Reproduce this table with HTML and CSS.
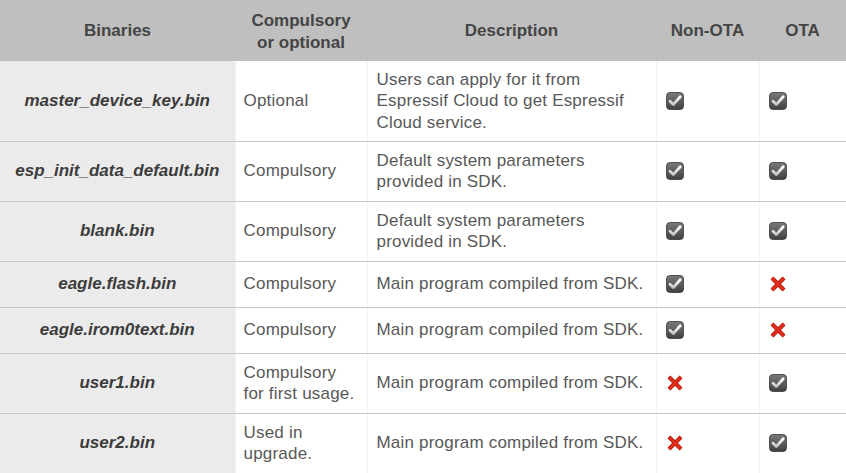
FILE: index.html
```html
<!DOCTYPE html>
<html>
<head>
<meta charset="utf-8">
<link rel="stylesheet" href="styles.css">
</head>
<body>
<svg width="0" height="0" class="defs">
  <defs>
    <linearGradient id="boxg" x1="0" y1="0" x2="0" y2="1">
      <stop offset="0" stop-color="#7a7a7a"/>
      <stop offset="1" stop-color="#404040"/>
    </linearGradient>
    <linearGradient id="chkg" x1="0" y1="0" x2="0" y2="1">
      <stop offset="0" stop-color="#ffffff"/>
      <stop offset="1" stop-color="#c4c4c4"/>
    </linearGradient>
    <symbol id="check" viewBox="0 0 18 18">
      <rect x="0.5" y="0.5" width="17" height="17" rx="3.5" fill="url(#boxg)" stroke="#383838" stroke-width="0.8"/>
      <path d="M4 9.3 L7.3 12.6 L14.2 4.8" fill="none" stroke="url(#chkg)" stroke-width="2.8" stroke-linecap="round" stroke-linejoin="round"/>
    </symbol>
    <symbol id="cross" viewBox="0 0 18 18">
      <path d="M3 3 L15 15 M15 3 L3 15" fill="none" stroke="#a8160b" stroke-width="4" stroke-linecap="butt"/>
      <path d="M3 3 L15 15 M15 3 L3 15" fill="none" stroke="#e22c1a" stroke-width="2.8" stroke-linecap="butt"/>
    </symbol>
  </defs>
</svg>
<table class="bins">
  <colgroup>
    <col class="c-name"><col class="c-req"><col class="c-desc"><col class="c-non"><col class="c-ota">
  </colgroup>
  <thead>
    <tr class="head">
      <th>Binaries</th>
      <th class="two">Compulsory<br>or optional</th>
      <th>Description</th>
      <th>Non-OTA</th>
      <th>OTA</th>
    </tr>
  </thead>
  <tbody>
    <tr class="r-3">
      <td class="name">master_device_key.bin</td>
      <td>Optional</td>
      <td>Users can apply for it from Espressif Cloud to get Espressif Cloud service.</td>
      <td class="ic"><svg class="icon"><use href="#check"/></svg></td>
      <td class="ic"><svg class="icon"><use href="#check"/></svg></td>
    </tr>
    <tr class="r-2">
      <td class="name">esp_init_data_default.bin</td>
      <td>Compulsory</td>
      <td>Default system parameters provided in SDK.</td>
      <td class="ic"><svg class="icon"><use href="#check"/></svg></td>
      <td class="ic"><svg class="icon"><use href="#check"/></svg></td>
    </tr>
    <tr class="r-2">
      <td class="name">blank.bin</td>
      <td>Compulsory</td>
      <td>Default system parameters provided in SDK.</td>
      <td class="ic"><svg class="icon"><use href="#check"/></svg></td>
      <td class="ic"><svg class="icon"><use href="#check"/></svg></td>
    </tr>
    <tr class="r-1">
      <td class="name">eagle.flash.bin</td>
      <td>Compulsory</td>
      <td>Main program compiled from SDK.</td>
      <td class="ic"><svg class="icon"><use href="#check"/></svg></td>
      <td class="ic"><svg class="icon"><use href="#cross"/></svg></td>
    </tr>
    <tr class="r-1">
      <td class="name">eagle.irom0text.bin</td>
      <td>Compulsory</td>
      <td>Main program compiled from SDK.</td>
      <td class="ic"><svg class="icon"><use href="#check"/></svg></td>
      <td class="ic"><svg class="icon"><use href="#cross"/></svg></td>
    </tr>
    <tr class="r-2">
      <td class="name">user1.bin</td>
      <td>Compulsory<br>for first usage.</td>
      <td>Main program compiled from SDK.</td>
      <td class="ic"><svg class="icon"><use href="#cross"/></svg></td>
      <td class="ic"><svg class="icon"><use href="#check"/></svg></td>
    </tr>
    <tr class="r-2">
      <td class="name">user2.bin</td>
      <td>Used in<br>upgrade.</td>
      <td>Main program compiled from SDK.</td>
      <td class="ic"><svg class="icon"><use href="#cross"/></svg></td>
      <td class="ic"><svg class="icon"><use href="#check"/></svg></td>
    </tr>
  </tbody>
</table>
</body>
</html>
```

FILE: styles.css
```css
html, body {
  margin: 0;
  padding: 0;
  background: #ffffff;
}
.defs {
  position: absolute;
  width: 0;
  height: 0;
}
.bins {
  width: 846px;
  border-collapse: collapse;
  table-layout: fixed;
  font-family: "Liberation Sans", Arial, sans-serif;
  font-size: 17px;
  letter-spacing: 0.2px;
  line-height: 21.5px;
  color: #585858;
}
.c-name { width: 235px; }
.c-req { width: 132px; }
.c-desc { width: 289px; }
.c-non { width: 103px; }
.c-ota { width: 87px; }

.head {
  background: #bebfbe;
  height: 61px;
}
.head th {
  font-weight: bold;
  color: #454545;
  font-size: 17px;
  letter-spacing: 0;
  padding: 0;
  text-align: center;
  vertical-align: middle;
  line-height: 22px;
}
.head th.two { padding-top: 2px; }

td {
  padding: 0 8px;
  vertical-align: middle;
  border-bottom: 1.5px solid #c6c6c6;
  border-left: 1px solid #f2f2f2;
}
td:first-child { border-left: none; }
.r-3 { height: 80px; }
.r-2 { height: 60px; }
.r-1 { height: 46px; }

td.name {
  background: #ebebeb;
  text-align: center;
  font-style: italic;
  font-weight: bold;
  letter-spacing: 0;
  color: #3c3c3c;
  padding: 0 2px;
}
td:nth-child(3) { padding-left: 9px; padding-right: 10px; }
td.ic {
  padding: 0 0 0 9px;
  line-height: 0;
}
.icon {
  width: 18px;
  height: 18px;
  display: inline-block;
  vertical-align: middle;
}
```
